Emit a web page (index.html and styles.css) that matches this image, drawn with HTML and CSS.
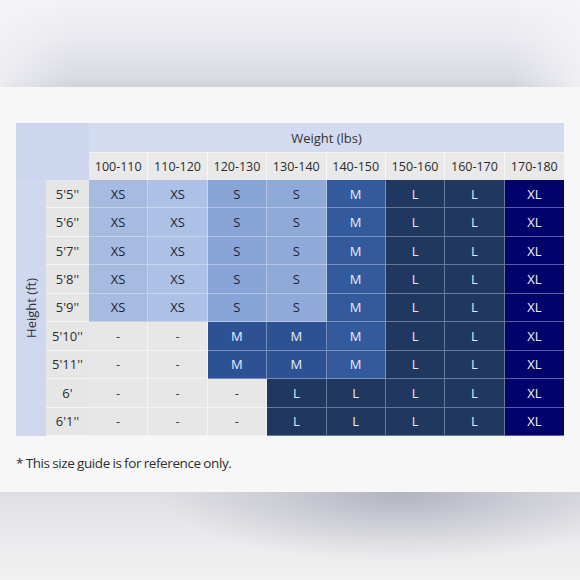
FILE: index.html
```html
<!DOCTYPE html>
<html lang="en">
<head>
<meta charset="utf-8">
<title>Size guide</title>
<link rel="stylesheet" href="styles.css">
</head>
<body>
<div class="top-bg"></div>
<main class="card">
  <div class="chart">
    <div class="corner"></div>
    <div class="weight-title">Weight (lbs)</div>
    <div class="wh">100-110</div><div class="wh">110-120</div><div class="wh">120-130</div><div class="wh">130-140</div><div class="wh">140-150</div><div class="wh">150-160</div><div class="wh">160-170</div><div class="wh last">170-180</div>
    <div class="height-title"><span>Height (ft)</span></div>

    <div class="hv">5'5''</div><div class="c xs">XS</div><div class="c xs b">XS</div><div class="c s">S</div><div class="c s b">S</div><div class="c m b">M</div><div class="c l">L</div><div class="c l">L</div><div class="c xl">XL</div>
    <div class="hv">5'6''</div><div class="c xs">XS</div><div class="c xs b">XS</div><div class="c s">S</div><div class="c s b">S</div><div class="c m b">M</div><div class="c l">L</div><div class="c l">L</div><div class="c xl">XL</div>
    <div class="hv">5'7''</div><div class="c xs">XS</div><div class="c xs b">XS</div><div class="c s">S</div><div class="c s b">S</div><div class="c m b">M</div><div class="c l">L</div><div class="c l">L</div><div class="c xl">XL</div>
    <div class="hv">5'8''</div><div class="c xs">XS</div><div class="c xs b">XS</div><div class="c s">S</div><div class="c s b">S</div><div class="c m b">M</div><div class="c l">L</div><div class="c l">L</div><div class="c xl">XL</div>
    <div class="hv">5'9''</div><div class="c xs">XS</div><div class="c xs b">XS</div><div class="c s">S</div><div class="c s b">S</div><div class="c m b">M</div><div class="c l">L</div><div class="c l">L</div><div class="c xl">XL</div>
    <div class="hv">5'10''</div><div class="c na">-</div><div class="c na">-</div><div class="c m">M</div><div class="c m">M</div><div class="c m b">M</div><div class="c l">L</div><div class="c l">L</div><div class="c xl">XL</div>
    <div class="hv">5'11''</div><div class="c na">-</div><div class="c na">-</div><div class="c m">M</div><div class="c m">M</div><div class="c m b">M</div><div class="c l">L</div><div class="c l">L</div><div class="c xl">XL</div>
    <div class="hv">6'</div><div class="c na">-</div><div class="c na">-</div><div class="c na">-</div><div class="c l">L</div><div class="c l">L</div><div class="c l">L</div><div class="c l">L</div><div class="c xl">XL</div>
    <div class="hv">6'1''</div><div class="c na">-</div><div class="c na">-</div><div class="c na">-</div><div class="c l">L</div><div class="c l">L</div><div class="c l">L</div><div class="c l">L</div><div class="c xl">XL</div>
  </div>
  <p class="note">* This size guide is for reference only.</p>
</main>
<div class="bottom-bg"></div>
</body>
</html>
```

FILE: styles.css
```css
* { box-sizing: border-box; }

html, body {
  margin: 0;
  padding: 0;
  width: 580px;
  height: 580px;
  overflow: hidden;
}

body {
  font-family: "Open Sans", "Noto Sans", sans-serif;
  color: #2b2b2b;
  background: #eeeef0;
}

.top-bg {
  height: 87px;
  background:
    linear-gradient(to right, rgba(245,245,248,0.7) 0%, rgba(245,245,248,0) 12%, rgba(245,245,248,0) 88%, rgba(245,245,248,0.8) 100%),
    linear-gradient(to bottom, #f3f3f6 0%, #e9e9ef 45%, #d9dbe3 90%, #cfd1db 100%);
}

.card {
  height: 405px;
  background: #f7f7f7;
  padding: 36px 16px 0 16px;
}

.chart {
  display: grid;
  grid-template-columns: 30px 43px repeat(8, 1fr);
  grid-template-rows: 29px 28px repeat(9, 1fr);
  width: 548px;
  height: 313px;
  font-size: 12.5px;
  background: #d2daf0;
}

.chart > div {
  display: flex;
  align-items: center;
  justify-content: center;
}

.corner {
  grid-column: 1 / 3;
  grid-row: 1 / 3;
  background: #cdd6ef;
}

.weight-title {
  grid-column: 3 / 11;
  grid-row: 1;
  background: #d3dbf1;
  font-size: 13px;
  color: #333;
}

.wh {
  background: #e9e9e9;
  color: #2b2b2b;
  border-right: 1px solid #f6f6f6;
  border-top: 1px solid #f3f3f5;
}

.wh.last { border-right: none; }

.height-title {
  grid-column: 1;
  grid-row: 3 / 12;
  background: #cfd8ef;
  font-size: 13px;
  color: #333;
}

.height-title span {
  writing-mode: vertical-rl;
  transform: rotate(180deg);
  white-space: nowrap;
}

.hv {
  background: #e6e6e6;
  color: #2b2b2b;
  font-size: 13px;
  border-bottom: 1px solid #f4f4f4;
}

.c {
  font-size: 13px;
  border-right: 1px solid rgba(255,255,255,0.35);
  border-bottom: 1px solid rgba(255,255,255,0.35);
}

.xs { background: #a7bbe1; color: #1e2433; }
.xs.b { background: #adc0e5; }
.s { background: #89a4d6; color: #1e2433; }
.s.b { background: #8fa9d9; }
.m { background: #2d5294; color: #e9eef8; }
.m.b { background: #325a9c; }
.l { background: #20385f; color: #e6eaf3; border-color: rgba(190,200,225,0.45); }
.xl { background: #02026b; color: #f1f2fa; border-right: none; border-bottom-color: rgba(190,200,225,0.45); }
.na { background: #e7e7e7; color: #444; border-color: #f3f3f3; }

.note {
  margin: 18px 0 0 0;
  font-size: 13.5px;
  letter-spacing: -0.4px;
  word-spacing: -0.5px;
  color: #2e2e2e;
}

.bottom-bg {
  height: 88px;
  background:
    radial-gradient(ellipse 240px 70px at 400px 0px, rgba(172,174,188,0.9) 0%, rgba(172,174,188,0.4) 50%, rgba(172,174,188,0) 100%),
    linear-gradient(to bottom, #dedfe4 0%, #ececee 60%, #f1f1f2 100%);
}
```
